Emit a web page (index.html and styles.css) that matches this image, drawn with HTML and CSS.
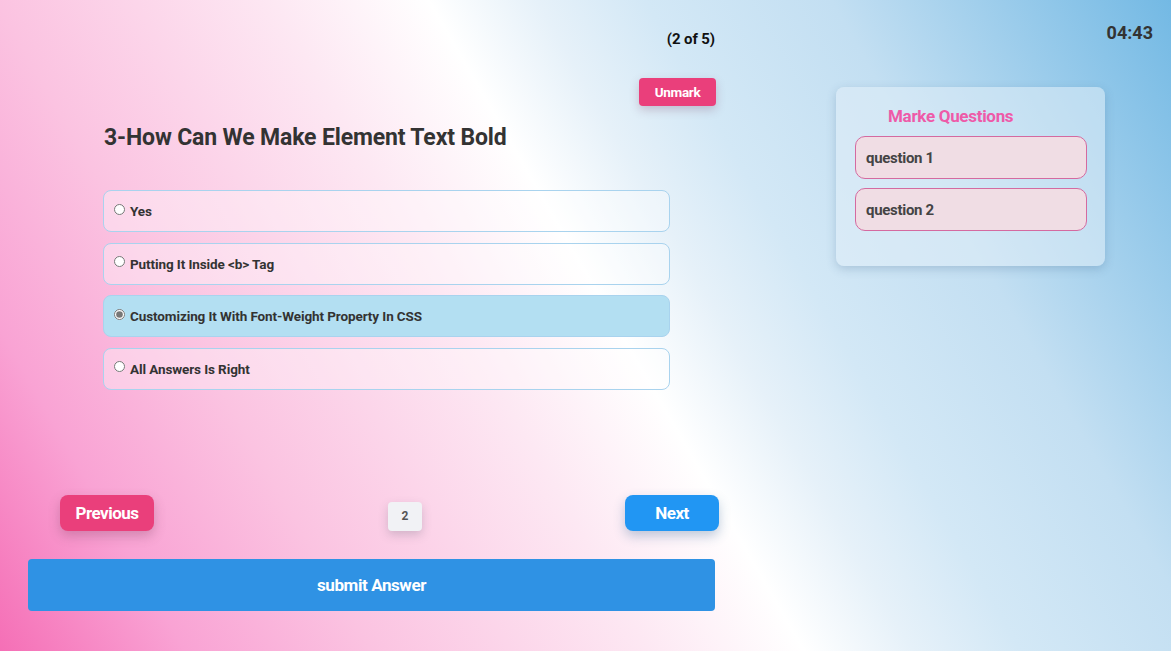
FILE: index.html
```html
<!DOCTYPE html>
<html lang="en">
<head>
<meta charset="utf-8">
<title>Quiz</title>
<link rel="stylesheet" href="styles.css">
</head>
<body>
<div class="page">
  <main class="quiz">
    <div class="count-row"><span class="count">(2 of 5)</span></div>
    <div class="mark-row"><button class="btn-unmark">Unmark</button></div>
    <h1 class="question">3-How Can We Make Element Text Bold</h1>
    <div class="answers">
      <label class="answer"><input type="radio" name="a"><span>Yes</span></label>
      <label class="answer"><input type="radio" name="a"><span>Putting It Inside &lt;b&gt; Tag</span></label>
      <label class="answer selected"><input type="radio" name="a" checked><span>Customizing It With Font-Weight Property In CSS</span></label>
      <label class="answer"><input type="radio" name="a"><span>All Answers Is Right</span></label>
    </div>
    <div class="nav">
      <button class="btn-prev">Previous</button>
      <span class="page-num">2</span>
      <button class="btn-next">Next</button>
    </div>
    <button class="btn-submit">submit Answer</button>
  </main>
  <aside class="side">
    <div class="timer">04:43</div>
    <section class="marked">
      <h2 class="marked-title">Marke Questions</h2>
      <div class="marked-item">question 1</div>
      <div class="marked-item">question 2</div>
    </section>
  </aside>
</div>
</body>
</html>
```

FILE: styles.css
```css
* { box-sizing: border-box; }
html, body { margin: 0; height: 100%; }
body {
  font-family: Roboto, "Noto Sans", sans-serif;
  font-weight: 700;
  color: #333;
  background: linear-gradient(60deg, #f56fb6 0%, #f9a3d4 12%, #fbc3e1 24%, #fde8f3 42%, #ffffff 52%, #e6f1f9 59%, #d3e8f6 66%, #c3dff2 78%, #73b9e4 100%);
  overflow: hidden;
}
button { font-family: inherit; font-weight: 700; border: none; cursor: pointer; }
.page { display: flex; height: 651px; }
.quiz { width: 691px; margin-left: 28px; flex: none; }
.count-row { display: flex; justify-content: flex-end; padding-top: 30px; padding-right: 4px; }
.count { font-size: 15px; line-height: 18px; color: #111; letter-spacing: -0.1px; }
.mark-row { display: flex; justify-content: flex-end; margin-top: 30px; padding-right: 3px; }
.btn-unmark {
  width: 77px; height: 28px; border-radius: 4px;
  background: #ea3f7b; color: #fff; font-size: 13.5px; letter-spacing: -0.3px;
  box-shadow: 0 4px 10px rgba(120, 60, 90, 0.25);
}
.question {
  margin: 18px 0 0 76px; font-size: 23px; line-height: 28px; color: #333;
  letter-spacing: -0.15px;
}
.answers { margin: 38px 0 0 75px; width: 567px; display: flex; flex-direction: column; gap: 10.6px; }
.answer {
  height: 42px; display: flex; align-items: center; gap: 5px;
  padding: 0 10px; border: 1px solid #a9d3ee; border-radius: 8px;
  background: rgba(255, 255, 255, 0.35); font-size: 13.5px; letter-spacing: -0.1px; color: #333;
}
.answer input { margin: 0; width: 11px; height: 11px; position: relative; top: -2px; accent-color: #777; }
.answer.selected { background: #b3dff2; }
.nav { display: flex; align-items: flex-start; margin-top: 105px; padding-left: 32px; }
.btn-prev {
  width: 94px; height: 36px; border-radius: 8px; background: #ea3f7b; color: #fff;
  font-size: 17px; letter-spacing: -0.5px; box-shadow: 0 5px 12px rgba(120, 60, 90, 0.3);
}
.page-num {
  margin: 7px 0 0 234px; width: 34px; height: 29px; border-radius: 4px; background: #f1f2f5;
  display: flex; align-items: center; justify-content: center; font-size: 12px; color: #555;
  box-shadow: 0 4px 10px rgba(90, 90, 110, 0.25);
}
.btn-next {
  margin-left: auto; width: 94px; height: 36px; border-radius: 8px; background: #2196f3; color: #fff;
  font-size: 17px; letter-spacing: -0.5px; box-shadow: 0 5px 12px rgba(40, 90, 140, 0.3);
}
.btn-submit {
  display: block; margin-top: 28px; width: 687px; height: 52px; border-radius: 4px;
  background: #2f92e4; color: #fff; font-size: 17px; letter-spacing: -0.4px;
}
.side { flex: 1; display: flex; flex-direction: column; }
.timer { align-self: flex-end; margin: 23px 18px 0 0; font-size: 18px; line-height: 20px; color: #333; }
.marked {
  margin: 44px 0 0 117px; width: 269px; height: 179px; border-radius: 8px;
  background: rgba(225, 238, 248, 0.55); box-shadow: 0 3px 10px rgba(60, 100, 140, 0.25);
  padding: 18px 18px 0 19px;
}
.marked-title { margin: 0 0 9px 33px; font-size: 17px; line-height: 22px; color: #ee5aa8; letter-spacing: -0.3px; }
.marked-item {
  height: 43px; margin-bottom: 9px; border: 1px solid #d46aa0; border-radius: 10px;
  background: #f0dde4; display: flex; align-items: center; padding-left: 10px;
  font-size: 15px; color: #444; letter-spacing: -0.3px;
}
```
